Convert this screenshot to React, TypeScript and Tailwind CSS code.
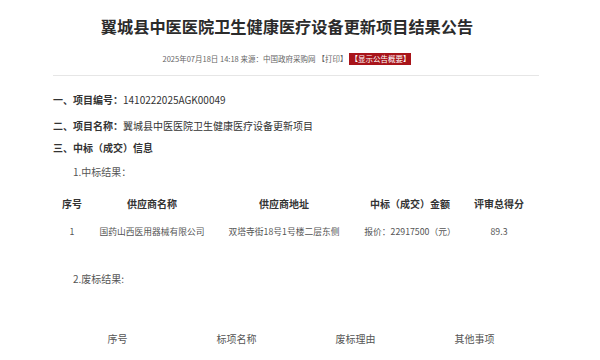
import React from 'react';

const winRows = [
  {
    no: '1',
    name: '国药山西医用器械有限公司',
    addr: '双塔寺街18号1号楼二层东侧',
    amount: '报价：22917500（元）',
    score: '89.3',
  },
];

export default function App() {
  return (
    <div
      className="w-[600px] h-[360px] overflow-hidden bg-white text-[#333]"
      style={{ fontFamily: '"Noto Sans CJK SC", "Noto Sans", sans-serif' }}
    >
      {/* Header */}
      <div className="pt-[12px] pr-[26px] text-center">
        <h1 className="text-[16.2px] leading-[28px] font-bold text-[#2b2b2b]">
          翼城县中医医院卫生健康医疗设备更新项目结果公告
        </h1>
        <div className="mt-[13px] flex items-center justify-center gap-[2px] text-[7.5px] leading-[12px] text-[#666]">
          <span>2025年07月18日 14:18 来源：中国政府采购网</span>
          <span>【打印】</span>
          <span className="bg-[#a8141a] text-white px-[1px]">【显示公告概要】</span>
        </div>
      </div>
      <div className="ml-[53px] w-[486px] mt-[10px] border-t border-[#e6e6e6]" />

      {/* Body */}
      <div className="px-[53px] pt-[16px] text-[10px] leading-[16px]">
        <p>
          <span className="font-bold">一、项目编号：</span>1410222025AGK00049
        </p>
        <p className="mt-[10px]">
          <span className="font-bold">二、项目名称：</span>翼城县中医医院卫生健康医疗设备更新项目
        </p>
        <p className="mt-[6px] font-bold">三、中标（成交）信息</p>
        <p className="mt-[8px] pl-[20px] text-[#555]">1.中标结果：</p>

        <table className="mt-[16px] w-[480px] table-fixed text-center">
          <colgroup>
            <col className="w-[38px]" />
            <col className="w-[122px]" />
            <col className="w-[142px]" />
            <col className="w-[110px]" />
            <col className="w-[68px]" />
          </colgroup>
          <thead>
            <tr className="text-[10px] font-bold text-[#333]">
              <th className="pb-[12px]">序号</th>
              <th className="pb-[12px]">供应商名称</th>
              <th className="pb-[12px]">供应商地址</th>
              <th className="pb-[12px]">中标（成交）金额</th>
              <th className="pb-[12px]">评审总得分</th>
            </tr>
          </thead>
          <tbody className="text-[8.75px] text-[#555]">
            {winRows.map((r, i) => (
              <tr key={i}>
                <td>{r.no}</td>
                <td className="whitespace-nowrap">{r.name}</td>
                <td className="whitespace-nowrap">{r.addr}</td>
                <td className="whitespace-nowrap">{r.amount}</td>
                <td>{r.score}</td>
              </tr>
            ))}
          </tbody>
        </table>

        <p className="mt-[31px] pl-[20px] text-[10px] text-[#555]">2.废标结果:</p>

        <table className="mt-[44px] ml-[5px] w-[476px] table-fixed text-center text-[10px] text-[#555]">
          <thead>
            <tr>
              <th className="font-normal">序号</th>
              <th className="font-normal">标项名称</th>
              <th className="font-normal">废标理由</th>
              <th className="font-normal">其他事项</th>
            </tr>
          </thead>
        </table>
      </div>
    </div>
  );
}
